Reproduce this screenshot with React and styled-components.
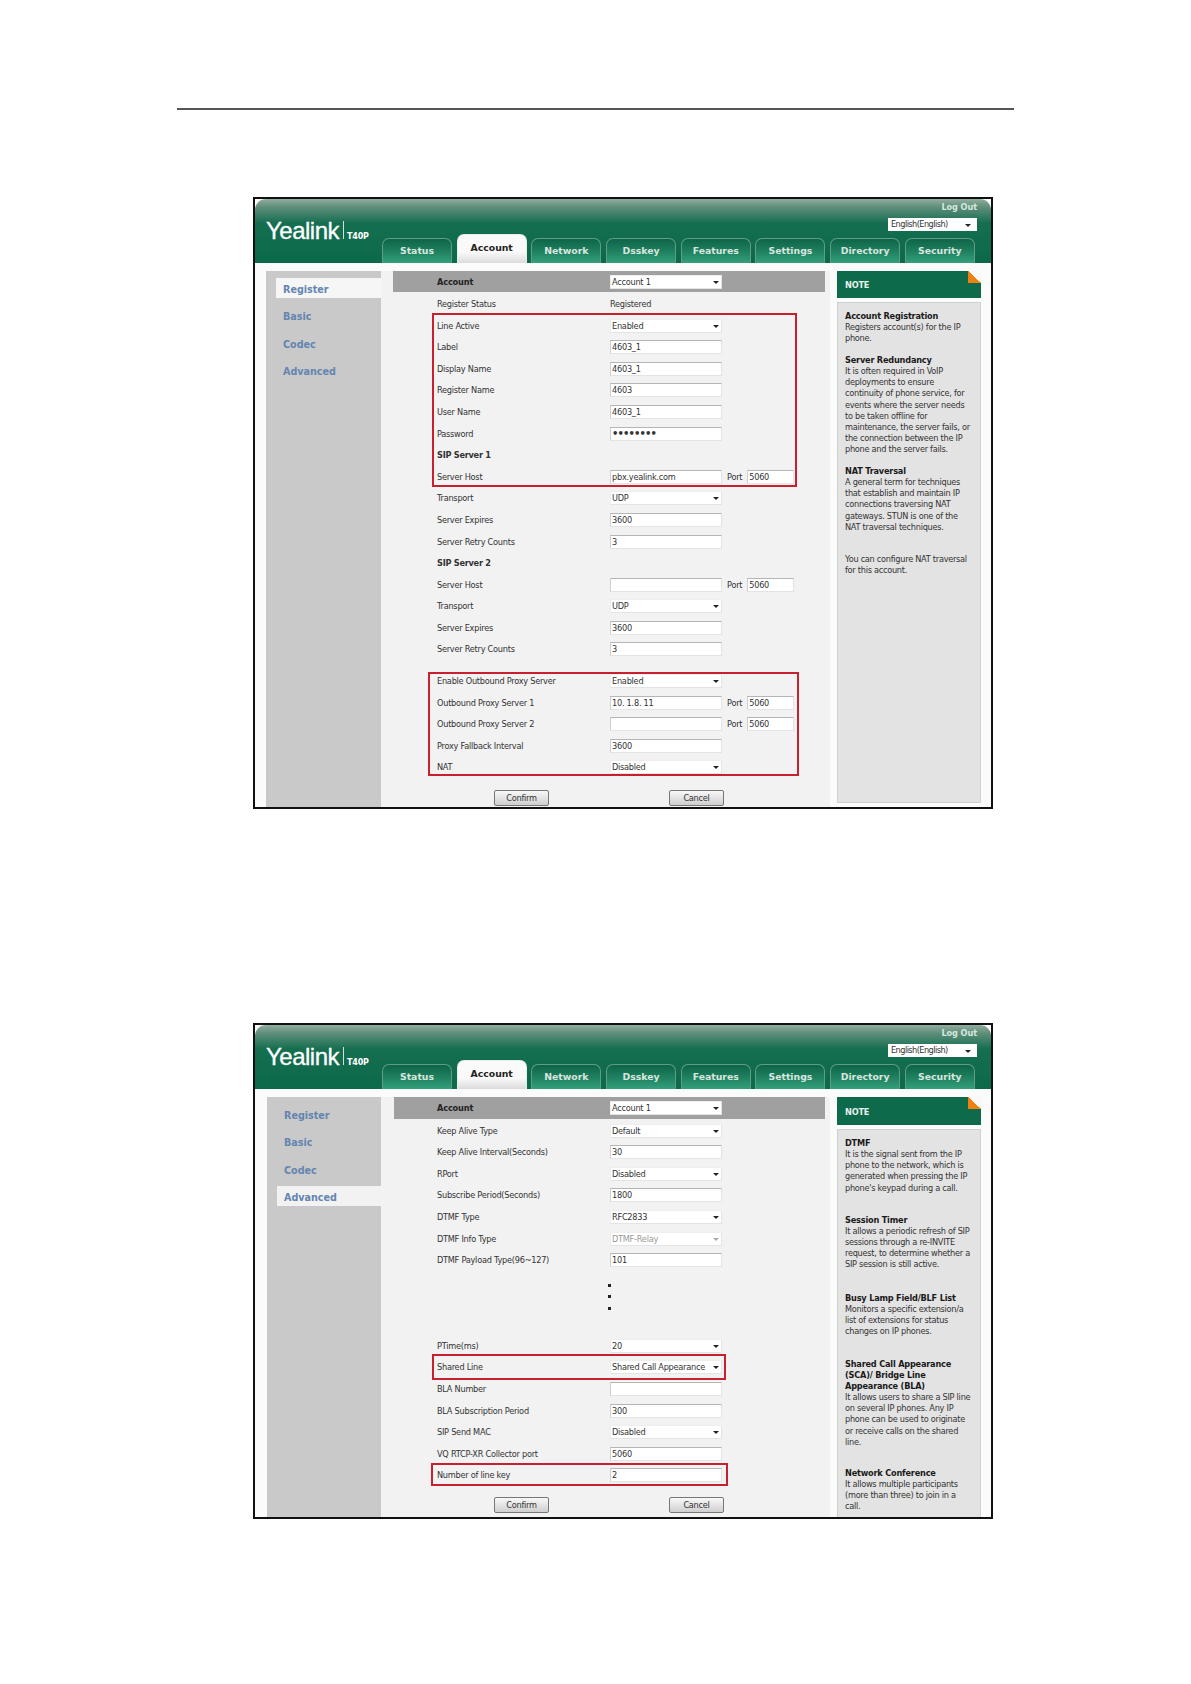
import React from "react";
import styled, { createGlobalStyle } from "styled-components";

const Global = createGlobalStyle`
  html, body { margin: 0; padding: 0; background: #fff; }
  body { font-family: "DejaVu Sans", "Liberation Sans", sans-serif; }
`;
const UI = `"DejaVu Sans", "Liberation Sans", sans-serif`;
const TIGHT = "-0.25px";

const Page = styled.div`
  width: 1191px;
  height: 1684px;
  overflow: hidden;
  padding-top: 108px;
  box-sizing: border-box;
`;
const Rule = styled.div`
  width: 837px;
  height: 2px;
  margin-left: 177px;
  background: #555;
`;
const Frame = styled.section`
  box-sizing: border-box;
  width: 740px;
  height: ${(p) => p.$h}px;
  margin: ${(p) => p.$mt}px 0 0 253px;
  border: 2px solid #111;
  background: #fbfbfb;
  display: flex;
  flex-direction: column;
  overflow: hidden;
`;
const Header = styled.header`
  height: 64px;
  flex: none;
  border-radius: 11px 11px 0 0;
  background: linear-gradient(#92ad9f 0, #5f8f7b 8px, #156e50 24px, #0b6a4a 100%);
  display: grid;
  grid-template-columns: 127px 1fr;
`;
const Brand = styled.div`
  padding: 19px 0 0 11px;
  display: flex;
  align-items: flex-start;
  color: #fff;
`;
const Logo = styled.span`
  font: 400 24px/26px "Liberation Sans", sans-serif;
  letter-spacing: -0.5px;
  -webkit-text-stroke: 0.3px #fff;
`;
const Model = styled.span`
  margin: 3px 0 0 4px;
  padding: 11px 0 0 3px;
  border-left: 1px solid #cfe0d8;
  height: 7px;
  font: 700 8px/9px "DejaVu Sans", sans-serif;
  letter-spacing: -0.2px;
`;
const HeadRight = styled.div`
  display: flex;
  flex-direction: column;
  justify-content: space-between;
  padding-right: 14px;
`;
const TopTools = styled.div`
  display: flex;
  flex-direction: column;
  align-items: flex-end;
  padding-top: 3px;
  gap: 6px;
`;
const LogOut = styled.span`
  font: 700 8.2px/10px ${UI};
  letter-spacing: -0.1px;
  color: #d7e6df;
`;
const LangSelect = styled.div`
  position: relative;
  box-sizing: border-box;
  width: 89px;
  height: 13px;
  padding-left: 3px;
  background: #fff;
  font: 400 8.2px/13px ${UI};
  letter-spacing: -0.55px;
  color: #333;
`;
const Tabs = styled.nav`
  display: flex;
  gap: 4.7px;
  align-items: flex-end;
`;
const Tab = styled.div`
  box-sizing: border-box;
  width: 70px;
  height: ${(p) => (p.$active ? 29 : 25)}px;
  border-radius: 7px 7px 0 0;
  border: 1px solid ${(p) => (p.$active ? "#e8efe9" : "#5f9d87")};
  border-bottom: 0;
  background: ${(p) =>
    p.$active
      ? "linear-gradient(#fafafa 60%, #dcdcdc 100%)"
      : "linear-gradient(#0e6448 0, #1f7f5f 50%, #33a07c 100%)"};
  color: ${(p) => (p.$active ? "#222" : "#d8e6df")};
  text-align: center;
  font: 700 9.3px/24px ${UI};
  padding-top: ${(p) => (p.$active ? 1 : 0)}px;
`;
const Body = styled.div`
  flex: 1;
  min-height: 0;
  display: flex;
  padding-top: 8px;
`;
const Sidebar = styled.aside`
  flex: none;
  box-sizing: border-box;
  width: ${(p) => 126 - p.$left}px;
  margin-left: ${(p) => p.$left}px;
  background: #c9c9c9;
  padding-top: 7px;
  display: flex;
  flex-direction: column;
  gap: 7.3px;
`;
const NavItem = styled.div`
  position: relative;
  z-index: 1;
  height: 20px;
  width: ${(p) => (p.$active ? (p.$wide ? 110 : 105) : 105)}px;
  margin-left: 10px;
  padding-left: 7px;
  box-sizing: border-box;
  background: ${(p) => (p.$active ? (p.$wide ? "#f2f2f2" : "#f6f6f6") : "transparent")};
  color: #6485b0;
  font: 700 9.6px/23px ${UI};
`;
const Main = styled.main`
  flex: none;
  width: 449px;
  background: #f2f2f2;
`;
const Bar = styled.div`
  box-sizing: border-box;
  height: ${(p) => p.$h}px;
  width: ${(p) => 444 - p.$left}px;
  margin-left: ${(p) => p.$left}px;
  padding-left: ${(p) => 56 - p.$left}px;
  background: #a0a0a0;
  display: flex;
  align-items: center;
  margin-bottom: ${(p) => p.$after}px;
`;
const BarLabel = styled.span`
  width: 173px;
  font: 700 8.2px/12px ${UI};
  letter-spacing: -0.15px;
  color: #222;
`;
const RowList = styled.div`
  padding-left: 56px;
`;
const Row = styled.div`
  height: 21.6px;
  display: flex;
  align-items: center;
`;
const Label = styled.span`
  width: 173px;
  flex: none;
  font: ${(p) => (p.$bold ? 700 : 400)} 8.2px/12px ${UI};
  letter-spacing: ${TIGHT};
  color: #333;
  white-space: nowrap;
`;
const Value = styled.span`
  font: 400 8.2px/12px ${UI};
  letter-spacing: ${TIGHT};
  color: #333;
`;
const Field = styled.div`
  position: relative;
  box-sizing: border-box;
  width: ${(p) => p.$w || 112}px;
  height: 14px;
  padding-left: 1px;
  background: #fff;
  border: 1px solid #e4e4e4;
  border-top-color: ${(p) => (p.$select ? "#eee" : "#b5b5b5")};
  border-left-color: ${(p) => (p.$select ? "#eee" : "#d0d0d0")};
  font: ${(p) => (p.$dots ? "700 10px" : "400 8.2px")}/12px ${UI};
  letter-spacing: ${(p) => (p.$dots ? "-0.9px" : TIGHT)};
  color: ${(p) => (p.$disabled ? "#9a9a9a" : "#333")};
  white-space: nowrap;
`;
const Arrow = styled.i`
  position: absolute;
  right: ${(p) => p.$r || 2}px;
  top: 50%;
  margin-top: -1px;
  border-left: 3px solid transparent;
  border-right: 3px solid transparent;
  border-top: 3px solid ${(p) => (p.$disabled ? "#aaa" : "#222")};
`;
const PortLabel = styled.span`
  margin: 0 5px 0 5px;
  font: 400 8.2px/12px ${UI};
  letter-spacing: ${TIGHT};
  color: #333;
`;
const Highlight = styled.div`
  position: relative;
  &::after {
    content: "";
    position: absolute;
    box-sizing: border-box;
    left: ${(p) => p.$l}px;
    top: ${(p) => p.$t}px;
    width: ${(p) => p.$w}px;
    height: ${(p) => p.$ht}px;
    border: 2px solid #c9202f;
    pointer-events: none;
  }
`;
const Gap = styled.div`
  height: ${(p) => p.$h}px;
`;
const Ellipsis = styled.div`
  height: 64px;
  box-sizing: border-box;
  padding: 13px 0 0 170.5px;
  display: flex;
  flex-direction: column;
  gap: 8.4px;
`;
const Dot = styled.b`
  display: block;
  width: 3px;
  height: 3px;
  background: #222;
`;
const Buttons = styled.div`
  display: flex;
  gap: 120px;
  padding: ${(p) => p.$mt}px 0 0 57px;
`;
const Btn = styled.div`
  box-sizing: border-box;
  width: 55px;
  height: 16px;
  border: 1px solid #777;
  border-radius: 2px;
  background: linear-gradient(#f8f8f8, #cfcfcf);
  text-align: center;
  font: 400 8.2px/14px ${UI};
  letter-spacing: ${TIGHT};
  color: #333;
`;
const Note = styled.div`
  flex: none;
  width: 144px;
  margin-left: 7px;
  padding-bottom: ${(p) => p.$pb}px;
  display: flex;
  flex-direction: column;
`;
const NoteHead = styled.div`
  position: relative;
  box-sizing: border-box;
  height: ${(p) => p.$h}px;
  flex: none;
  background: #0d6a4b;
  color: #e8f0ec;
  padding: 1px 0 0 8px;
  font: 700 8.2px/${(p) => p.$h}px ${UI};
  letter-spacing: -0.2px;
  &::after {
    content: "";
    position: absolute;
    right: 0;
    top: 0;
    width: 13px;
    height: 12px;
    background: linear-gradient(to top right, #f08110 50%, #f8f8f8 51%);
  }
`;
const NoteBody = styled.div`
  flex: 1;
  margin-top: 4px;
  padding: 8px 0 0 7px;
  box-sizing: border-box;
  background: #e3e3e3;
  border: 1px solid #cdd2cf;
  border-bottom-width: ${(p) => (p.$closed ? 1 : 0)}px;
  overflow: hidden;
`;
const NoteBlock = styled.p`
  margin: 0 0 ${(p) => p.$mb}px;
  font: 400 8.2px/11.15px ${UI};
  letter-spacing: -0.27px;
  color: #333;
  white-space: pre-line;
`;
const NoteTitle = styled.strong`
  display: block;
  font-weight: 700;
  letter-spacing: -0.2px;
  color: #1a1a1a;
  white-space: pre-line;
`;

const TABS = ["Status", "Account", "Network", "Dsskey", "Features", "Settings", "Directory", "Security"];
const NAV = ["Register", "Basic", "Codec", "Advanced"];

const Control = ({ r }) => {
  if (r.sel !== undefined)
    return (
      <Field $select $disabled={r.disabled}>
        {r.sel}
        <Arrow $disabled={r.disabled} />
      </Field>
    );
  if (r.val !== undefined)
    return (
      <>
        <Field $dots={r.dots}>{r.val}</Field>
        {r.port && (
          <>
            <PortLabel>Port</PortLabel>
            <Field $w={47}>{r.port}</Field>
          </>
        )}
      </>
    );
  if (r.text) return <Value>{r.text}</Value>;
  return null;
};
const Rows = ({ items }) =>
  items.map((r) => (
    <Row key={r.label + (r.k || "")}>
      <Label $bold={r.bold}>{r.label}</Label>
      <Control r={r} />
    </Row>
  ));

const Shell = ({ h, mt, active, sideLeft, barLeft, barH, barAfter, noteHead, notePb, children, notes }) => (
  <Frame $h={h} $mt={mt}>
    <Header>
      <Brand>
        <Logo>Yealink</Logo>
        <Model>T40P</Model>
      </Brand>
      <HeadRight>
        <TopTools>
          <LogOut>Log Out</LogOut>
          <LangSelect>
            English(English)
            <Arrow $r={6} />
          </LangSelect>
        </TopTools>
        <Tabs>
          {TABS.map((t) => (
            <Tab key={t} $active={t === "Account"}>{t}</Tab>
          ))}
        </Tabs>
      </HeadRight>
    </Header>
    <Body>
      <Sidebar $left={sideLeft}>
        {NAV.map((n) => (
          <NavItem key={n} $active={n === active} $wide={n === "Advanced"}>{n}</NavItem>
        ))}
      </Sidebar>
      <Main>
        <Bar $left={barLeft} $h={barH} $after={barAfter}>
          <BarLabel>Account</BarLabel>
          <Field $select>Account 1<Arrow /></Field>
        </Bar>
        {children}
      </Main>
      <Note $pb={notePb}>
        <NoteHead $h={noteHead}>NOTE</NoteHead>
        <NoteBody $closed={notePb > 0}>
          {notes.map((n, i) => (
            <NoteBlock key={i} $mb={n.mb}>
              {n.title && <NoteTitle>{n.title}</NoteTitle>}
              {n.body}
            </NoteBlock>
          ))}
        </NoteBody>
      </Note>
    </Body>
  </Frame>
);

const NOTES1 = [
  { title: "Account Registration", body: "Registers account(s) for the IP\nphone.", mb: 10.5 },
  { title: "Server Redundancy", body: "It is often required in VoIP\ndeployments to ensure\ncontinuity of phone service, for\nevents where the server needs\nto be taken offline for\nmaintenance, the server fails, or\nthe connection between the IP\nphone and the server fails.", mb: 10.5 },
  { title: "NAT Traversal", body: "A general term for techniques\nthat establish and maintain IP\nconnections traversing NAT\ngateways. STUN is one of the\nNAT traversal techniques.", mb: 21.5 },
  { body: "You can configure NAT traversal\nfor this account.", mb: 0 },
];
const NOTES2 = [
  { title: "DTMF", body: "It is the signal sent from the IP\nphone to the network, which is\ngenerated when pressing the IP\nphone's keypad during a call.", mb: 21 },
  { title: "Session Timer", body: "It allows a periodic refresh of SIP\nsessions through a re-INVITE\nrequest, to determine whether a\nSIP session is still active.", mb: 22 },
  { title: "Busy Lamp Field/BLF List", body: "Monitors a specific extension/a\nlist of extensions for status\nchanges on IP phones.", mb: 21.5 },
  { title: "Shared Call Appearance\n(SCA)/ Bridge Line\nAppearance (BLA)", body: "It allows users to share a SIP line\non several IP phones. Any IP\nphone can be used to originate\nor receive calls on the shared\nline.", mb: 20 },
  { title: "Network Conference", body: "It allows multiple participants\n(more than three) to join in a\ncall.", mb: 0 },
];

export default function App() {
  return (
    <>
      <Global />
      <Page>
        <Rule />
        <Shell h={612} mt={87} active="Register" sideLeft={11} barLeft={12} barH={21} barAfter={1.2} noteHead={27} notePb={4} notes={NOTES1}>
          <RowList>
            <Rows items={[{ label: "Register Status", text: "Registered" }]} />
            <Highlight $l={-5} $t={-1.7} $w={365} $ht={174}>
              <Rows
                items={[
                  { label: "Line Active", sel: "Enabled" },
                  { label: "Label", val: "4603_1" },
                  { label: "Display Name", val: "4603_1" },
                  { label: "Register Name", val: "4603" },
                  { label: "User Name", val: "4603_1" },
                  { label: "Password", val: "••••••••", dots: true },
                  { label: "SIP Server 1", bold: true },
                  { label: "Server Host", val: "pbx.yealink.com", port: "5060" },
                ]}
              />
            </Highlight>
            <Rows
              items={[
                { label: "Transport", sel: "UDP" },
                { label: "Server Expires", val: "3600" },
                { label: "Server Retry Counts", val: "3" },
                { label: "SIP Server 2", bold: true },
                { label: "Server Host", k: "2", val: "", port: "5060" },
                { label: "Transport", k: "2", sel: "UDP" },
                { label: "Server Expires", k: "2", val: "3600" },
                { label: "Server Retry Counts", k: "2", val: "3" },
              ]}
            />
            <Gap $h={10} />
            <Highlight $l={-9.5} $t={1.3} $w={371.5} $ht={104.5}>
              <Rows
                items={[
                  { label: "Enable Outbound Proxy Server", sel: "Enabled" },
                  { label: "Outbound Proxy Server 1", val: "10. 1.8. 11", port: "5060" },
                  { label: "Outbound Proxy Server 2", val: "", port: "5060" },
                  { label: "Proxy Fallback Interval", val: "3600" },
                  { label: "NAT", sel: "Disabled" },
                ]}
              />
            </Highlight>
            <Buttons $mt={12}>
              <Btn>Confirm</Btn>
              <Btn>Cancel</Btn>
            </Buttons>
          </RowList>
        </Shell>
        <Shell h={496} mt={214} active="Advanced" sideLeft={12} barLeft={13} barH={22} barAfter={0.8} noteHead={28} notePb={0} notes={NOTES2}>
          <RowList>
            <Rows
              items={[
                { label: "Keep Alive Type", sel: "Default" },
                { label: "Keep Alive Interval(Seconds)", val: "30" },
                { label: "RPort", sel: "Disabled" },
                { label: "Subscribe Period(Seconds)", val: "1800" },
                { label: "DTMF Type", sel: "RFC2833" },
                { label: "DTMF Info Type", sel: "DTMF-Relay", disabled: true },
                { label: "DTMF Payload Type(96~127)", val: "101" },
              ]}
            />
            <Ellipsis>
              <Dot />
              <Dot />
              <Dot />
            </Ellipsis>
            <Rows items={[{ label: "PTime(ms)", sel: "20" }]} />
            <Highlight $l={-5} $t={-2.1} $w={294} $ht={26}>
              <Rows items={[{ label: "Shared Line", sel: "Shared Call Appearance" }]} />
            </Highlight>
            <Rows
              items={[
                { label: "BLA Number", val: "" },
                { label: "BLA Subscription Period", val: "300" },
                { label: "SIP Send MAC", sel: "Disabled" },
                { label: "VQ RTCP-XR Collector port", val: "5060" },
              ]}
            />
            <Highlight $l={-6} $t={-1.1} $w={297} $ht={23}>
              <Rows items={[{ label: "Number of line key", val: "2" }]} />
            </Highlight>
            <Buttons $mt={10.4}>
              <Btn>Confirm</Btn>
              <Btn>Cancel</Btn>
            </Buttons>
          </RowList>
        </Shell>
      </Page>
    </>
  );
}
